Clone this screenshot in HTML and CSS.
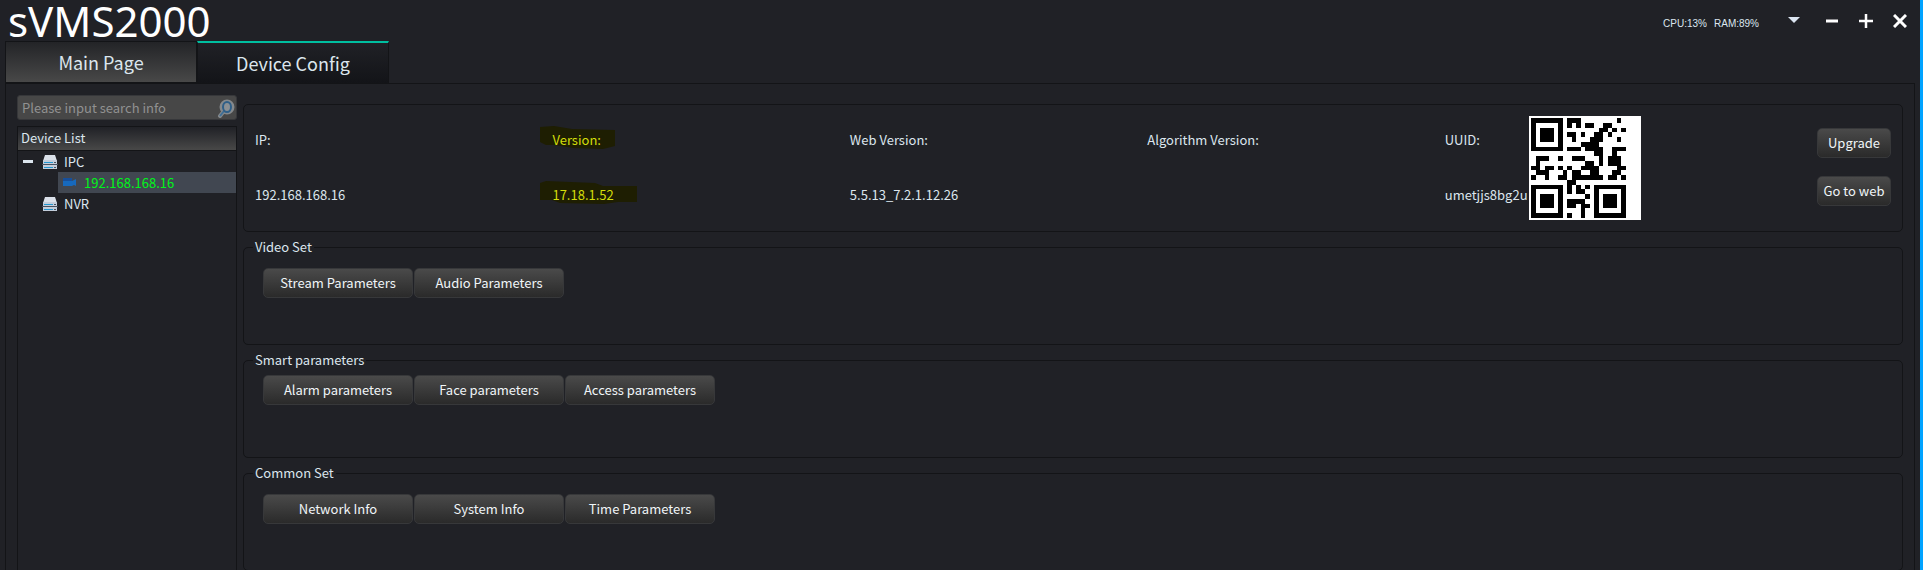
FILE: index.html
```
<!DOCTYPE html>
<html lang="en">
<head>
<meta charset="utf-8">
<title>sVMS2000</title>
<link rel="stylesheet" href="styles.css">
</head>
<body>
<div class="window">
  <header class="titlebar">
    <h1 class="brand">sVMS2000</h1>
    <div class="usage"><span>CPU:13%</span><span>RAM:89%</span></div>
    <div class="controls">
      <button type="button" class="control" aria-label="Menu"><svg width="14" height="14" viewBox="0 0 14 14"><path d="M1 3h12L7 9z" fill="#dce6f2"/></svg></button>
      <button type="button" class="control" aria-label="Minimize"><svg width="14" height="14" viewBox="0 0 14 14"><path d="M1 7h12" stroke="#fff" stroke-width="3"/></svg></button>
      <button type="button" class="control" aria-label="Maximize"><svg width="14" height="14" viewBox="0 0 14 14"><path d="M0 7h14M7 0v14" stroke="#fff" stroke-width="2.500"/></svg></button>
      <button type="button" class="control" aria-label="Close"><svg width="14" height="14" viewBox="0 0 14 14"><path d="M1 1l12 12M13 1L1 13" stroke="#fff" stroke-width="3"/></svg></button>
    </div>
  </header>
  <nav class="tabs">
    <button type="button" class="tab">Main Page</button>
    <button type="button" class="tab tab-active">Device Config</button>
  </nav>
  <div class="workspace">
    <aside class="sidebar">
      <div class="search">
        <input class="search-input" type="text" placeholder="Please input search info" aria-label="Search">
        <button type="button" class="search-button" aria-label="Find">
          <svg width="18" height="20" viewBox="0 0 18 20">
            <path d="M7 13l-4 5" stroke="#85898c" stroke-width="4" stroke-linecap="round"/>
            <circle cx="10" cy="9" r="6" fill="#8d9499" stroke="#85898c" stroke-width="3"/>
            <path d="M7 13l-4 5" stroke="#3f6f96" stroke-width="2"/>
            <ellipse cx="10" cy="9" rx="4" ry="5" fill="#8b9094" stroke="#2f5f88" stroke-width="2"/>
          </svg>
        </button>
      </div>
      <div class="tree">
        <div class="tree-header">Device List</div>
        <ul class="tree-list">
          <li>
            <div class="tree-row">
              <span class="toggle"></span>
              <svg class="server" width="16" height="16" viewBox="0 0 16 16"><path d="M3 1h10l2 6H1z" fill="#dbe1ea"/><path d="M1 6h14v4H1zM1 11h14v4H1z" fill="#c3cddb"/><path d="M2 8.500h9M2 13.500h9" stroke="#2496cf" stroke-width="1"/><path d="M12 8.500h2M12 13.500h2M0 10.500h16" stroke="#46505f"/></svg>
              <span>IPC</span>
            </div>
            <ul class="tree-list tree-children">
              <li class="tree-row tree-selected">
                <svg width="13" height="9" viewBox="0 0 13 9"><path d="M0 0h9v3l4-2v7l-2-1-2 1H0z" fill="#1769bd"/><path d="M0 0h9v3H0z" fill="#174f9a"/></svg>
                <span>192.168.168.16</span>
              </li>
            </ul>
          </li>
          <li class="tree-row">
            <span class="toggle toggle-none"></span>
            <svg class="server" width="16" height="16" viewBox="0 0 16 16"><path d="M3 1h10l2 6H1z" fill="#dbe1ea"/><path d="M1 6h14v4H1zM1 11h14v4H1z" fill="#c3cddb"/><path d="M2 8.500h9M2 13.500h9" stroke="#2496cf" stroke-width="1"/><path d="M12 8.500h2M12 13.500h2M0 10.500h16" stroke="#46505f"/></svg>
            <span>NVR</span>
          </li>
        </ul>
      </div>
    </aside>
    <main class="content">
      <section class="info">
        <dl class="field"><dt>IP:</dt><dd>192.168.168.16</dd></dl>
        <dl class="field">
          <dt class="marked"><svg class="mark" width="75" height="24" viewBox="0 0 75 24"><path d="M0 1L14 0l18 3 43 1v16l-12 3-30-1-18-3H6l-6-3z" fill="#1e1e02"/></svg><span>Version:</span></dt>
          <dd class="marked"><svg class="mark" width="97" height="24" viewBox="0 0 97 24"><path d="M0 2l6-2 49 2 8 3h34v16H78l-14 2-44-1-8-3H0z" fill="#1e1e02"/></svg><span>17.18.1.52</span></dd>
        </dl>
        <dl class="field"><dt>Web Version:</dt><dd>5.5.13_7.2.1.12.26</dd></dl>
        <dl class="field"><dt>Algorithm Version:</dt><dd></dd></dl>
        <dl class="field"><dt>UUID:</dt><dd>umetjjs8bg2u</dd></dl>
        <svg class="qr" viewBox="0 0 112 104" role="img" aria-label="QR code">
          <path d="M0 0h112v104H0z" fill="#fff"/>
          <svg x="2" y="2" width="95" height="100" viewBox="0 0 21 21" preserveAspectRatio="none" shape-rendering="crispEdges">
            <path fill="#000" fill-rule="evenodd" d="M0 0h7v7H0zM1 1v5h5V1zM2 2h3v3H2zM0 14h7v7H0zM1 15v5h5v-5zM2 16h3v3H2zM14 14h7v7h-7zM15 15v5h5v-5zM16 16h3v3h-3z"/>
            <path fill="#000" d="M8 0h3v1H8zM19 0h1v1h-1zM8 1h1v1H8zM10 1h1v1h-1zM12 1h2v1h-2zM16 1h2v1h-2zM15 2h2v1h-2zM18 2h1v1h-1zM20 2h1v1h-1zM8 3h2v1H8zM11 3h1v1h-1zM14 3h2v1h-2zM17 3h1v1h-1zM9 4h1v1H9zM13 4h3v1h-3zM19 4h1v1h-1zM11 5h4v1h-4zM8 6h3v1H8zM12 6h4v1h-4zM18 6h3v1h-3zM14 7h2v1h-2zM18 7h1v1h-1zM1 8h3v1H1zM6 8h1v1H6zM9 8h3v1H9zM15 8h1v1h-1zM17 8h3v1h-3zM1 9h1v1H1zM12 9h2v1h-2zM15 9h1v1h-1zM17 9h3v1h-3zM0 10h2v1H0zM3 10h2v1H3zM6 10h1v1H6zM8 10h1v1H8zM11 10h4v1h-4zM19 10h2v1h-2zM1 11h3v1H1zM7 11h1v1H7zM9 11h2v1H9zM13 11h2v1h-2zM18 11h2v1h-2zM0 12h1v1H0zM3 12h1v1H3zM6 12h2v1H6zM9 12h7v1H9zM17 12h2v1h-2zM20 12h1v1h-1zM8 13h2v1H8zM8 14h1v1H8zM10 14h1v1h-1zM12 14h1v1h-1zM8 15h1v1H8zM10 15h2v1h-2zM12 16h1v1h-1zM8 17h4v1H8zM8 18h2v1H8zM11 18h2v1h-2zM11 19h1v1h-1zM8 20h1v1H8zM11 20h1v1h-1z"/>
          </svg>
        </svg>
        <div class="actions">
          <button type="button" class="button">Upgrade</button>
          <button type="button" class="button">Go to web</button>
        </div>
      </section>
      <fieldset class="group">
        <legend>Video Set</legend>
        <div class="buttons">
          <button type="button" class="button">Stream Parameters</button>
          <button type="button" class="button">Audio Parameters</button>
        </div>
      </fieldset>
      <fieldset class="group group-tight">
        <legend>Smart parameters</legend>
        <div class="buttons">
          <button type="button" class="button">Alarm parameters</button>
          <button type="button" class="button">Face parameters</button>
          <button type="button" class="button">Access parameters</button>
        </div>
      </fieldset>
      <fieldset class="group">
        <legend>Common Set</legend>
        <div class="buttons">
          <button type="button" class="button">Network Info</button>
          <button type="button" class="button">System Info</button>
          <button type="button" class="button">Time Parameters</button>
        </div>
      </fieldset>
    </main>
  </div>
</div>
</body>
</html>
```
FILE: styles.css
```
* { box-sizing: border-box; }
body {
  margin: 0;
  background: #202126;
  color: #dce6ee;
  font: 13px/18px "Noto Sans CJK SC", "Noto Sans", sans-serif;
}
button, input { font: inherit; color: inherit; }
button { padding: 0; border: 0; background: none; }
svg { display: block; flex: none; }
dl, dd, ul { margin: 0; padding: 0; list-style: none; }

.window {
  display: flex;
  flex-direction: column;
  height: 100vh;
  overflow: hidden;
  padding: 0 5px;
  border-right: 3px solid #00a2ff;
}
.titlebar { display: flex; height: 41px; flex: none; padding-right: 8px; }
.brand {
  margin: 0 auto 0 3px;
  color: #fff;
  font-family: "Noto Sans", sans-serif;
  font-size: 42px;
  font-weight: 400;
  line-height: 42px;
}
.usage {
  display: flex;
  gap: 7px;
  padding-top: 15px;
  font: 10px/18px "Liberation Sans", Arial, sans-serif;
}
.controls { display: flex; gap: 20px; padding: 14px 0 0 28px; height: 28px; }
.control:nth-child(2) { margin-left: 4px; }

.tabs { display: flex; flex: none; height: 42px; }
.tab {
  width: 192px;
  border: 1px solid #131417;
  background: linear-gradient(#232427, #484848);
  font-size: 18px;
}
.tab-active {
  border-top: 2px solid #00bfa0;
  border-bottom: 0;
  background: linear-gradient(#202126, #131418);
}

.workspace {
  display: flex;
  flex: 1;
  gap: 6px;
  min-height: 0;
  padding: 11px 11px 0;
  border: 1px solid #131417;
  border-bottom: 0;
}
.sidebar { display: flex; flex-direction: column; gap: 6px; width: 220px; flex: none; }
.search {
  display: flex;
  align-items: center;
  height: 25px;
  flex: none;
  border: 1px solid #36373a;
  border-radius: 3px;
  background: #474747;
}
.search-input {
  flex: 1;
  min-width: 0;
  padding: 0 4px;
  border: 0;
  outline: 0;
  background: none;
}
.search-input::placeholder { color: #919191; opacity: 1; }
.search-button { padding-right: 1px; }

.tree { flex: 1; border: 1px solid #131417; border-bottom: 0; }
.tree-header {
  height: 24px;
  padding: 2px 3px;
  border-bottom: 1px solid #131417;
  background: linear-gradient(#202126, #484848);
}
.tree-row { display: flex; align-items: center; height: 21px; gap: 6px; padding-left: 5px; }
.toggle { width: 10px; height: 3px; margin-right: 3px; background: #dce6ee; }
.toggle-none { background: none; }
.tree-children { padding-left: 40px; }
.tree-selected { gap: 8px; background: #414751; color: #00f51a; }

.content { display: flex; flex: 1; flex-direction: column; gap: 6px; min-width: 0; padding-top: 9px; }
.info {
  display: grid;
  grid-template-columns: repeat(4, 27fr) 84px 112px 16fr 74px;
  flex: none;
  height: 128px;
  padding: 11px;
  border: 1px solid #131417;
  border-radius: 5px;
}
.field { display: grid; grid-template-rows: 18px 18px; gap: 37px; padding-top: 15px; }
.marked { position: relative; color: #d4df0a; }
.marked span { position: relative; }
.mark { position: absolute; top: -5px; left: -12px; }
.qr { width: 112px; height: 104px; }
.actions { display: flex; flex-direction: column; gap: 18px; padding-top: 12px; grid-column: 8; }
.button {
  height: 30px;
  border: 1px solid #37383a;
  border-radius: 5px;
  background: linear-gradient(#4a4a4a, #2a2a2a);
  color: #f0f5f8;
}
.group {
  flex: none;
  min-width: 0;
  height: 107px;
  margin: 0;
  padding: 12px 19px 0;
  border: 1px solid #131417;
  border-radius: 5px;
}
.group-tight { padding-top: 6px; }
.group legend { margin-left: -10px; padding: 0 2px; }
.buttons { display: flex; gap: 1px; }
.buttons .button { width: 150px; }
```
